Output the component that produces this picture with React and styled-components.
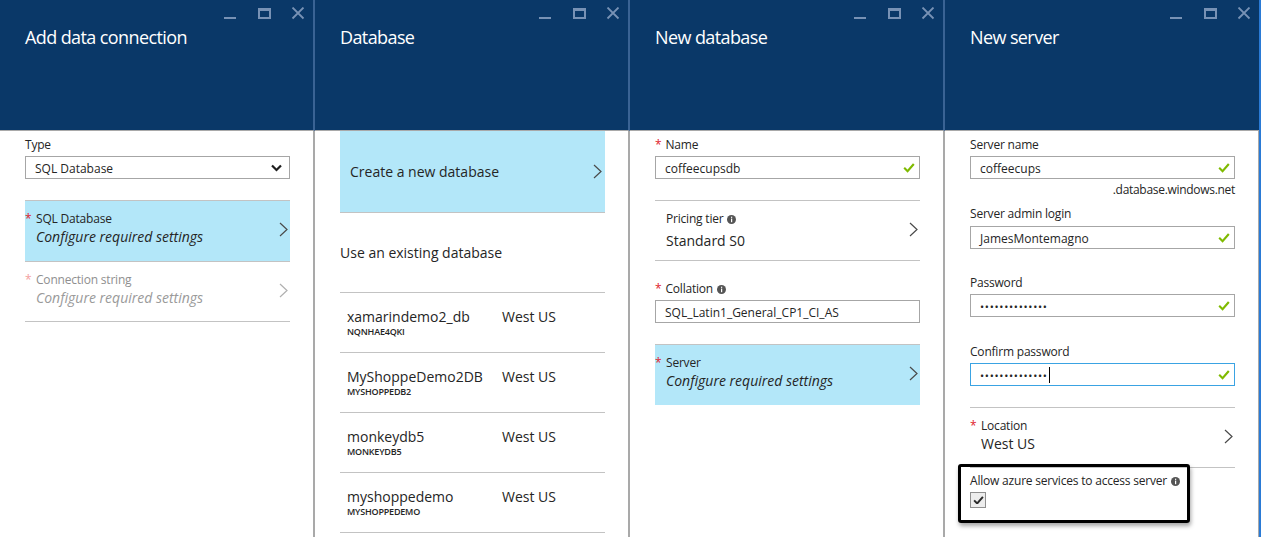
import React from 'react'
import styled, { createGlobalStyle } from 'styled-components'

const GlobalStyle = createGlobalStyle`
  * { box-sizing: border-box; }
  body {
    margin: 0;
    padding: 0;
    background: #fff;
    font-family: 'Open Sans', 'Noto Sans', sans-serif;
    color: #252525;
  }
`

const Page = styled.div`
  display: flex;
  height: 537px;
  overflow: hidden;
  background: #fff;
`

const Blade = styled.section`
  flex: none;
  width: ${p => (p.$last ? 314 : 315)}px;
  display: flex;
  flex-direction: column;
`

const Header = styled.header`
  height: 131px;
  background: #0a3868;
  border-right: ${p => (p.$last ? 'none' : '2px solid #3a6394')};
  border-bottom: 1px solid #a9a9a9;
  padding-left: 25px;
  display: flex;
  flex-direction: column;
`

const Controls = styled.div`
  height: 25px;
  display: flex;
  justify-content: flex-end;
  align-items: flex-start;
  gap: 20px;
  padding: 7px 8px 0 0;
`

const Title = styled.h2`
  margin: 0;
  font-size: 18px;
  line-height: 24px;
  font-weight: 400;
  color: #fff;
  letter-spacing: -0.6px;
`

const Body = styled.div`
  flex: 1;
  position: relative;
  border-right: ${p => (p.$last ? '1px' : '2px')} solid #a9a9a9;
  padding: 0 23px 0 25px;
  display: flex;
  flex-direction: column;
`

const EdgeStrip = styled.div`
  flex: 1;
  background: #2a7ad5;
`

const FieldLabel = styled.div`
  margin-top: ${p => p.$mt || 0}px;
  font-size: 12px;
  line-height: 16px;
  letter-spacing: -0.2px;
  display: flex;
  align-items: center;
  white-space: nowrap;
`

const Req = styled.span`
  color: ${p => (p.$faded ? '#f3a0a0' : '#e0202a')};
  margin-right: 4px;
`

const Input = styled.div`
  margin-top: ${p => p.$gap ?? 3}px;
  height: 23px;
  border: 1px solid ${p => (p.$focused ? '#3aa3e3' : '#a6a6a6')};
  display: flex;
  align-items: center;
  justify-content: space-between;
  padding: 1px 4px 0 9px;
  font-size: 12px;
  color: #252525;
`

const Dots = styled.span`
  display: flex;
  align-items: center;
  letter-spacing: 0.7px;
  font-size: 11px;
`

const Caret = styled.span`
  display: inline-block;
  width: 1px;
  height: 16px;
  background: #000;
  margin-left: 1px;
`

const Suffix = styled.div`
  margin-top: 3px;
  font-size: 12px;
  line-height: 16px;
  letter-spacing: -0.3px;
  text-align: right;
`

const Row = styled.div`
  margin-top: ${p => p.$mt || 0}px;
  height: 61px;
  flex: none;
  border-top: 1px solid #c3c3c3;
  border-bottom: ${p => (p.$bottom ? '1px solid #c3c3c3' : 'none')};
  background: ${p => (p.$selected ? '#b3e7f9' : 'transparent')};
  display: flex;
  align-items: flex-start;
  justify-content: space-between;
  padding: 10px 2px 0 11px;
`

const RowText = styled.div`
  display: flex;
  flex-direction: column;
  color: ${p => (p.$disabled ? '#8f8f8f' : '#252525')};
`

const RowLabel = styled.div`
  font-size: 12px;
  line-height: 16px;
  letter-spacing: -0.2px;
  margin-left: -11px;
  display: flex;
  align-items: center;
  white-space: nowrap;
  & > span:first-child { width: 11px; margin: 0; }
`

const RowValue = styled.div`
  margin-top: ${p => p.$mt || 0}px;
  font-size: 14px;
  line-height: 20px;
  font-style: ${p => (p.$italic ? 'italic' : 'normal')};
  color: ${p => (p.$disabled ? '#9a9a9a' : '#252525')};
  white-space: nowrap;
`

const ChevronBox = styled.div`
  margin-top: 11px;
  display: flex;
`

const CreateBox = styled.div`
  height: 82px;
  flex: none;
  background: #b3e7f9;
  border-bottom: 1px solid #c3c3c3;
  display: flex;
  align-items: center;
  justify-content: space-between;
  padding: 0 3px 0 10px;
  font-size: 14px;
`

const SectionTitle = styled.div`
  height: 80px;
  flex: none;
  display: flex;
  align-items: center;
  font-size: 14px;
  border-bottom: 1px solid #c3c3c3;
`

const DbRow = styled.div`
  height: 60px;
  flex: none;
  border-bottom: 1px solid #c3c3c3;
  display: grid;
  grid-template-columns: 155px 1fr;
  padding: 15px 0 0 7px;
`

const DbName = styled.div`
  font-size: 14px;
  line-height: 18px;
`

const DbId = styled.div`
  font-size: 9px;
  line-height: 12px;
  font-weight: 600;
  letter-spacing: -0.2px;
`

const AllowBlock = styled.div`
  position: relative;
  padding-top: 5px;
`

const Checkbox = styled.div`
  margin-top: 3px;
  width: 16px;
  height: 16px;
  border: 1px solid #8f8f8f;
  background: #ededed;
  display: flex;
  align-items: center;
  justify-content: center;
`

const Annotation = styled.div`
  position: absolute;
  left: -12px;
  top: -4px;
  width: 232px;
  height: 59px;
  border: 3px solid #000;
  border-radius: 3px;
  box-shadow: 1px 3px 4px rgba(0, 0, 0, 0.35);
  pointer-events: none;
`

const Minimize = () => (
  <svg width="14" height="14" viewBox="0 0 14 14">
    <rect x="1" y="10" width="12" height="2" fill="#7892b5" />
  </svg>
)

const Maximize = () => (
  <svg width="14" height="14" viewBox="0 0 14 14">
    <rect x="1" y="1" width="13" height="3" fill="#7892b5" />
    <rect x="1" y="1" width="2" height="11" fill="#7892b5" />
    <rect x="12" y="1" width="2" height="11" fill="#7892b5" />
    <rect x="1" y="10" width="13" height="2" fill="#7892b5" />
  </svg>
)

const Close = () => (
  <svg width="14" height="14" viewBox="0 0 14 14">
    <path d="M1.5 0.5 L12.5 11.5 M12.5 0.5 L1.5 11.5" stroke="#7892b5" strokeWidth="1.8" />
  </svg>
)

const Chevron = ({ color = '#4a4a4a' }) => (
  <svg width="9" height="15" viewBox="0 0 9 15">
    <polyline points="1,1 8,7.5 1,14" fill="none" stroke={color} strokeWidth="1.2" />
  </svg>
)

const ChevronDown = () => (
  <svg width="11" height="8" viewBox="0 0 11 8" style={{ marginRight: 3 }}>
    <polyline points="1,1.5 5.5,6 10,1.5" fill="none" stroke="#1e1e1e" strokeWidth="2.2" />
  </svg>
)

const Check = ({ color = '#7fba00', size = 12 }) => (
  <svg width={size} height={size * 0.8} viewBox="0 0 12 10">
    <polyline points="1,5 4.5,8.5 11,1" fill="none" stroke={color} strokeWidth="2.2" />
  </svg>
)

const Info = () => (
  <svg width="9" height="9" viewBox="0 0 9 9" style={{ marginLeft: 4 }}>
    <circle cx="4.5" cy="4.5" r="4.5" fill="#555" />
    <rect x="4" y="3.6" width="1.2" height="3.6" fill="#fff" />
    <rect x="4" y="1.7" width="1.2" height="1.2" fill="#fff" />
  </svg>
)

const BladeHeader = ({ title, last }) => (
  <Header $last={last}>
    <Controls>
      <Minimize />
      <Maximize />
      <Close />
    </Controls>
    <Title>{title}</Title>
  </Header>
)

const SettingRow = ({ label, value, required, disabled, selected, italic, bottom, mt, valueMt, info }) => (
  <Row $selected={selected} $bottom={bottom} $mt={mt}>
    <RowText $disabled={disabled}>
      <RowLabel>
        <Req $faded={disabled}>{required ? '*' : ''}</Req>
        {label}
        {info && <Info />}
      </RowLabel>
      <RowValue $italic={italic} $disabled={disabled} $mt={valueMt}>{value}</RowValue>
    </RowText>
    <ChevronBox>
      <Chevron color={disabled ? '#b0b0b0' : '#4a4a4a'} />
    </ChevronBox>
  </Row>
)

const databases = [
  { name: 'xamarindemo2_db', id: 'NQNHAE4QKI', region: 'West US' },
  { name: 'MyShoppeDemo2DB', id: 'MYSHOPPEDB2', region: 'West US' },
  { name: 'monkeydb5', id: 'MONKEYDB5', region: 'West US' },
  { name: 'myshoppedemo', id: 'MYSHOPPEDEMO', region: 'West US' },
]

const App = () => {
  return (
    <>
      <GlobalStyle />
      <Page>
        <Blade>
          <BladeHeader title="Add data connection" />
          <Body>
            <FieldLabel $mt={6}>Type</FieldLabel>
            <Input>
              <span>SQL Database</span>
              <ChevronDown />
            </Input>
            <SettingRow mt={21} required selected italic label="SQL Database" value="Configure required settings" />
            <SettingRow required disabled italic bottom label="Connection string" value="Configure required settings" />
          </Body>
        </Blade>

        <Blade>
          <BladeHeader title="Database" />
          <Body>
            <CreateBox>
              <span>Create a new database</span>
              <Chevron />
            </CreateBox>
            <SectionTitle>Use an existing database</SectionTitle>
            {databases.map(db => (
              <DbRow key={db.name}>
                <div>
                  <DbName>{db.name}</DbName>
                  <DbId>{db.id}</DbId>
                </div>
                <DbName>{db.region}</DbName>
              </DbRow>
            ))}
          </Body>
        </Blade>

        <Blade>
          <BladeHeader title="New database" />
          <Body>
            <FieldLabel $mt={6}><Req>*</Req>Name</FieldLabel>
            <Input>
              <span>coffeecupsdb</span>
              <Check />
            </Input>
            <SettingRow mt={21} bottom info label="Pricing tier" value="Standard S0" valueMt={4} />
            <FieldLabel $mt={20}><Req>*</Req>Collation<Info /></FieldLabel>
            <Input>
              <span>SQL_Latin1_General_CP1_CI_AS</span>
            </Input>
            <SettingRow mt={21} required selected italic label="Server" value="Configure required settings" />
          </Body>
        </Blade>

        <Blade $last>
          <BladeHeader title="New server" last />
          <Body $last>
            <FieldLabel $mt={6}>Server name</FieldLabel>
            <Input>
              <span>coffeecups</span>
              <Check />
            </Input>
            <Suffix>.database.windows.net</Suffix>
            <FieldLabel $mt={8}>Server admin login</FieldLabel>
            <Input $gap={4}>
              <span>JamesMontemagno</span>
              <Check />
            </Input>
            <FieldLabel $mt={26}>Password</FieldLabel>
            <Input>
              <Dots>••••••••••••••</Dots>
              <Check />
            </Input>
            <FieldLabel $mt={27}>Confirm password</FieldLabel>
            <Input $focused>
              <Dots>••••••••••••••<Caret /></Dots>
              <Check />
            </Input>
            <SettingRow mt={21} bottom required label="Location" value="West US" />
            <AllowBlock>
              <FieldLabel>Allow azure services to access server<Info /></FieldLabel>
              <Checkbox>
                <Check color="#2b2b2b" size={11} />
              </Checkbox>
              <Annotation />
            </AllowBlock>
          </Body>
        </Blade>
        <EdgeStrip />
      </Page>
    </>
  )
}

export default App
